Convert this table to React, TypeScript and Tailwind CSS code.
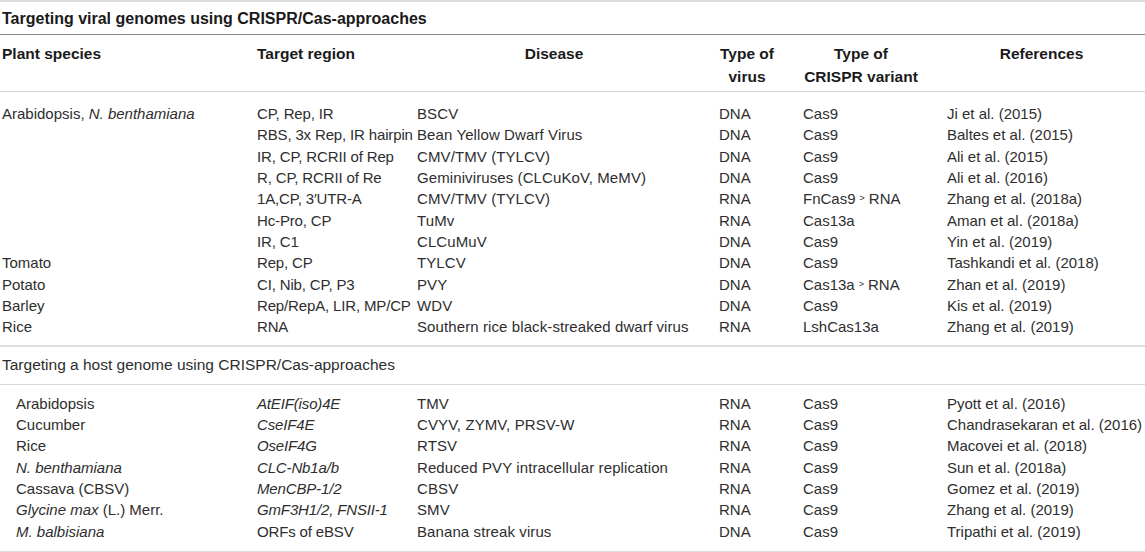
import React from "react";

type Row = {
  plant: React.ReactNode;
  target: React.ReactNode;
  disease: string;
  virus: string;
  variant: React.ReactNode;
  ref: string;
};

const Arrow = () => (
  <span className="relative -top-[3px] mx-[4px] text-[9px]">&gt;</span>
);

const viral: Row[] = [
  { plant: <>Arabidopsis, <i>N. benthamiana</i></>, target: "CP, Rep, IR", disease: "BSCV", virus: "DNA", variant: "Cas9", ref: "Ji et al. (2015)" },
  { plant: "", target: "RBS, 3x Rep, IR hairpin", disease: "Bean Yellow Dwarf Virus", virus: "DNA", variant: "Cas9", ref: "Baltes et al. (2015)" },
  { plant: "", target: "IR, CP, RCRII of Rep", disease: "CMV/TMV (TYLCV)", virus: "DNA", variant: "Cas9", ref: "Ali et al. (2015)" },
  { plant: "", target: "R, CP, RCRII of Re", disease: "Geminiviruses (CLCuKoV, MeMV)", virus: "DNA", variant: "Cas9", ref: "Ali et al. (2016)" },
  { plant: "", target: "1A,CP, 3′UTR-A", disease: "CMV/TMV (TYLCV)", virus: "RNA", variant: <>FnCas9<Arrow />RNA</>, ref: "Zhang et al. (2018a)" },
  { plant: "", target: "Hc-Pro, CP", disease: "TuMv", virus: "RNA", variant: "Cas13a", ref: "Aman et al. (2018a)" },
  { plant: "", target: "IR, C1", disease: "CLCuMuV", virus: "DNA", variant: "Cas9", ref: "Yin et al. (2019)" },
  { plant: "Tomato", target: "Rep, CP", disease: "TYLCV", virus: "DNA", variant: "Cas9", ref: "Tashkandi et al. (2018)" },
  { plant: "Potato", target: "CI, Nib, CP, P3", disease: "PVY", virus: "DNA", variant: <>Cas13a<Arrow />RNA</>, ref: "Zhan et al. (2019)" },
  { plant: "Barley", target: "Rep/RepA, LIR, MP/CP", disease: "WDV", virus: "DNA", variant: "Cas9", ref: "Kis et al. (2019)" },
  { plant: "Rice", target: "RNA", disease: "Southern rice black-streaked dwarf virus", virus: "RNA", variant: "LshCas13a", ref: "Zhang et al. (2019)" },
];

const host: Row[] = [
  { plant: "Arabidopsis", target: <i>AtEIF(iso)4E</i>, disease: "TMV", virus: "RNA", variant: "Cas9", ref: "Pyott et al. (2016)" },
  { plant: "Cucumber", target: <i>CseIF4E</i>, disease: "CVYV, ZYMV, PRSV-W", virus: "RNA", variant: "Cas9", ref: "Chandrasekaran et al. (2016)" },
  { plant: "Rice", target: <i>OseIF4G</i>, disease: "RTSV", virus: "RNA", variant: "Cas9", ref: "Macovei et al. (2018)" },
  { plant: <i>N. benthamiana</i>, target: <i>CLC-Nb1a/b</i>, disease: "Reduced PVY intracellular replication", virus: "RNA", variant: "Cas9", ref: "Sun et al. (2018a)" },
  { plant: "Cassava (CBSV)", target: <i>MenCBP-1/2</i>, disease: "CBSV", virus: "RNA", variant: "Cas9", ref: "Gomez et al. (2019)" },
  { plant: <><i>Glycine max</i> (L.) Merr.</>, target: <i>GmF3H1/2, FNSII-1</i>, disease: "SMV", virus: "RNA", variant: "Cas9", ref: "Zhang et al. (2019)" },
  { plant: <i>M. balbisiana</i>, target: "ORFs of eBSV", disease: "Banana streak virus", virus: "DNA", variant: "Cas9", ref: "Tripathi et al. (2019)" },
];

const grid = "grid grid-cols-[250px_160px_302px_84px_144px_205px]";

function DataRow({ r, indent }: { r: Row; indent?: boolean }) {
  return (
    <div className={`${grid} h-[21.33px] items-center whitespace-nowrap text-[15px]`}>
      <div className={indent ? "pl-[16px]" : "pl-[2px]"}>{r.plant}</div>
      <div className="pl-[7px] tracking-[-0.15px]">{r.target}</div>
      <div className="pl-[7px] tracking-[0.1px]">{r.disease}</div>
      <div className="pl-[7px]">{r.virus}</div>
      <div className="pl-[7px]">{r.variant}</div>
      <div className="pl-[7px]">{r.ref}</div>
    </div>
  );
}

export default function App() {
  return (
    <div
      className="w-[1145px] h-[552px] bg-white text-[#2e2e2e] text-[15.5px] overflow-hidden"
      style={{ fontFamily: '"Liberation Sans", Arial, sans-serif' }}
    >
      <div className="border-t-2 border-[#dcdcdc]" />
      <div className="h-[32px] flex items-center pl-[2px] pt-[2px] font-bold text-[16px] text-[#1a1a1a]">
        Targeting viral genomes using CRISPR/Cas-approaches
      </div>
      <div className="border-t border-[#8a8a8a]" />
      <div className={`${grid} h-[56px] pt-[7px] font-bold text-[#1a1a1a] leading-[23px]`}>
        <div className="pl-[2px]">Plant species</div>
        <div className="pl-[7px]">Target region</div>
        <div className="text-center pr-[14px]">Disease</div>
        <div className="text-center pr-[14px]">
          Type of
          <br />
          virus
        </div>
        <div className="text-center pr-[14px]">
          Type of
          <br />
          CRISPR variant
        </div>
        <div className="text-center pr-[2px]">References</div>
      </div>
      <div className="border-t border-[#d4d4d4]" />
      <div className="pt-[11px] pb-[7px]">
        {viral.map((r, i) => (
          <DataRow key={i} r={r} />
        ))}
      </div>
      <div className="border-t-2 border-[#dedede]" />
      <div className="h-[37px] flex items-center pl-[2px]">
        Targeting a host genome using CRISPR/Cas-approaches
      </div>
      <div className="border-t border-[#d8d8d8]" />
      <div className="pt-[8px] pb-[9px]">
        {host.map((r, i) => (
          <DataRow key={i} r={r} indent />
        ))}
      </div>
      <div className="border-t-2 border-[#dedede]" />
    </div>
  );
}
